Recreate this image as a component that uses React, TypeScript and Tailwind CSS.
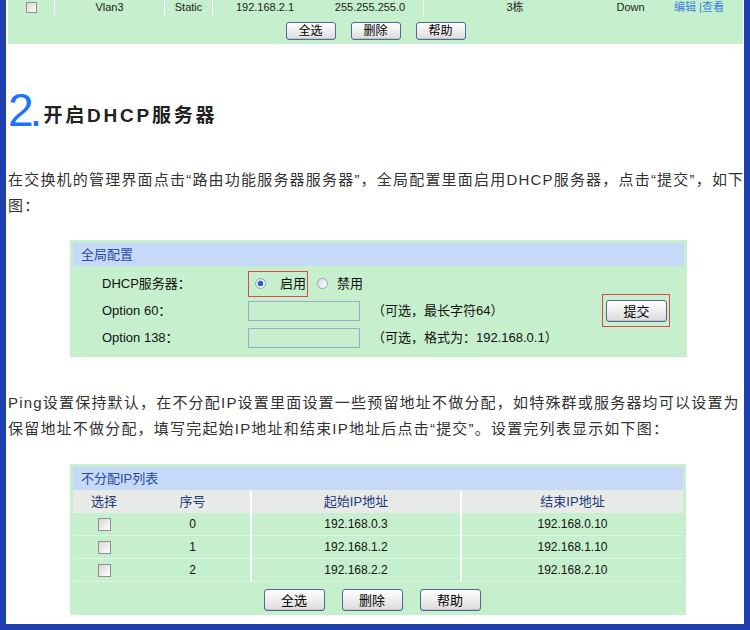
import type { ReactNode } from "react";

const FONT = "font-['Liberation_Sans','Noto_Sans_CJK_SC',sans-serif]";

function Btn({ children, small }: { children: ReactNode; small?: boolean }) {
  return (
    <button
      className={`${small ? "h-[18px] w-[50px] text-[12px]" : "h-[22px] w-[61px] text-[13px]"} rounded-[3px] border border-[#4c6a92] bg-linear-to-b from-white to-[#dcdcdc] leading-none text-black shadow-[inset_0_-1px_0_#c4c4c4]`}
    >
      {children}
    </button>
  );
}

function Check({ size = "w-[13px] h-[13px]" }: { size?: string }) {
  return <span className={`inline-block ${size} border border-[#8e9090] bg-linear-to-br from-[#d6d6d6] to-white`} />;
}

function Radio({ on }: { on?: boolean }) {
  return (
    <span className="flex h-[11px] w-[11px] items-center justify-center rounded-full border border-[#9aa2aa] bg-linear-to-br from-[#d8dde2] to-white">
      {on && <span className="h-[5px] w-[5px] rounded-full bg-[#1f5fd0] shadow-[0_0_1px_#0a3a9a]" />}
    </span>
  );
}

function Field() {
  return <div className="h-[20px] w-[112px] border border-[#95adcc]" />;
}

const rows = [
  { id: 0, start: "192.168.0.3", end: "192.168.0.10" },
  { id: 1, start: "192.168.1.2", end: "192.168.1.10" },
  { id: 2, start: "192.168.2.2", end: "192.168.2.10" },
];

export default function App() {
  return (
    <div className={`h-[630px] w-[750px] overflow-hidden border-x-[6px] border-b-[6px] border-[#1c41ae] bg-white ${FONT}`}>
      {/* tail of the interface table from the previous step */}
      <div className="ml-[2px] mr-[1px] bg-[#c6efce] text-[11px] text-[#222]">
        <div className="flex h-[15px] items-center">
          <div className="flex h-full w-[47px] items-center justify-center border-r border-white">
            <Check size="w-[11px] h-[11px]" />
          </div>
          <div className="flex h-full w-[110px] items-center justify-center border-r border-white">Vlan3</div>
          <div className="flex h-full w-[48px] items-center justify-center border-r border-white">Static</div>
          <div className="w-[104px] text-center">192.168.2.1</div>
          <div className="flex h-full w-[107px] items-center justify-center border-r border-white">255.255.255.0</div>
          <div className="w-[182px] text-center">3栋</div>
          <div className="w-[49px] text-center">Down</div>
          <div className="w-[88px] text-center text-[#3b7fe2]">编辑 |查看</div>
        </div>
        <div className="flex justify-center gap-[15px] pb-[4px] pt-[7px]">
          <Btn small>全选</Btn>
          <Btn small>删除</Btn>
          <Btn small>帮助</Btn>
        </div>
      </div>

      <div className="pl-[2px] text-[15px] tracking-[1.2px] text-[#333]">
        <h2 className="mt-[43px] flex items-end">
          <span className="text-[46px] leading-[46px] tracking-[-4px] text-[#1a73ff]">2.</span>
          <span className="mb-[7px] ml-[5px] text-[19px] font-bold leading-[20px] tracking-[2.8px] text-[#222]">开启DHCP服务器</span>
        </h2>

        <p className="mt-[34px] whitespace-nowrap leading-[26px]">
          在交换机的管理界面点击“路由功能服务器服务器”，全局配置里面启用DHCP服务器，点击“提交”，如下
          <br />
          图：
        </p>

        {/* 全局配置 */}
        <div className="ml-[62px] mt-[21px] w-[617px] bg-[#c6efce] p-[3px] pb-[6px] text-[13px] tracking-normal text-[#111]">
          <div className="h-[23px] bg-[#c6d9f9] pl-[8px] leading-[23px] text-[#274b9c]">全局配置</div>
          <div className="grid grid-cols-[146px_124px_230px_68px] grid-rows-[27px_27px_27px] items-center pl-[29px] pt-[4px]">
            <div>DHCP服务器：</div>
            <div className="col-span-2 flex items-center">
              <div className="flex h-[26px] w-[60px] items-center border border-[#e2454a] pl-[6px]">
                <Radio on />
                <span className="ml-[14px]">启用</span>
              </div>
              <span className="ml-[9px]">
                <Radio />
              </span>
              <span className="ml-[9px]">禁用</span>
            </div>
            <div />

            <div>Option 60：</div>
            <div>
              <Field />
            </div>
            <div>（可选，最长字符64）</div>
            <div className="flex h-[33px] w-[68px] items-start border border-[#e2454a] pl-[3px] pt-[5px]">
              <Btn>提交</Btn>
            </div>

            <div>Option 138：</div>
            <div>
              <Field />
            </div>
            <div>（可选，格式为：192.168.0.1）</div>
            <div />
          </div>
        </div>

        <p className="mt-[33px] whitespace-nowrap leading-[26px]">
          Ping设置保持默认，在不分配IP设置里面设置一些预留地址不做分配，如特殊群或服务器均可以设置为
          <br />
          保留地址不做分配，填写完起始IP地址和结束IP地址后点击“提交”。设置完列表显示如下图：
        </p>

        {/* 不分配IP列表 */}
        <div className="ml-[62px] mt-[22px] w-[616px] bg-[#c6efce] p-[3px] pb-[4px] text-[12px] tracking-normal text-[#111]">
          <div className="h-[23px] bg-[#c6d9f9] pl-[8px] text-[13px] leading-[23px] text-[#274b9c]">不分配IP列表</div>
          <div className="grid grid-cols-[62px_117px_210px_221px]">
            <div className="h-[23px] bg-[#e8eae8] text-center text-[13px] leading-[23px] text-[#1e3a78]">选择</div>
            <div className="h-[23px] border-r-2 border-white bg-[#e8eae8] text-center text-[13px] leading-[23px] text-[#1e3a78]">序号</div>
            <div className="h-[23px] border-r-2 border-white bg-[#e8eae8] text-center text-[13px] leading-[23px] text-[#1e3a78]">起始IP地址</div>
            <div className="h-[23px] bg-[#e8eae8] text-center text-[13px] leading-[23px] text-[#1e3a78]">结束IP地址</div>
            {rows.map((r) => (
              <div key={r.id} className="contents">
                <div className="flex h-[23px] items-center justify-center border-b border-[#dcf5e0]">
                  <Check />
                </div>
                <div className="h-[23px] border-b border-r-2 border-[#dcf5e0] border-r-white text-center leading-[22px]">{r.id}</div>
                <div className="h-[23px] border-b border-r-2 border-[#dcf5e0] border-r-white text-center leading-[22px]">{r.start}</div>
                <div className="h-[23px] border-b border-[#dcf5e0] text-center leading-[22px]">{r.end}</div>
              </div>
            ))}
          </div>
          <div className="flex justify-center gap-[17px] pr-[12px] pt-[7px]">
            <Btn>全选</Btn>
            <Btn>删除</Btn>
            <Btn>帮助</Btn>
          </div>
        </div>
      </div>
    </div>
  );
}
